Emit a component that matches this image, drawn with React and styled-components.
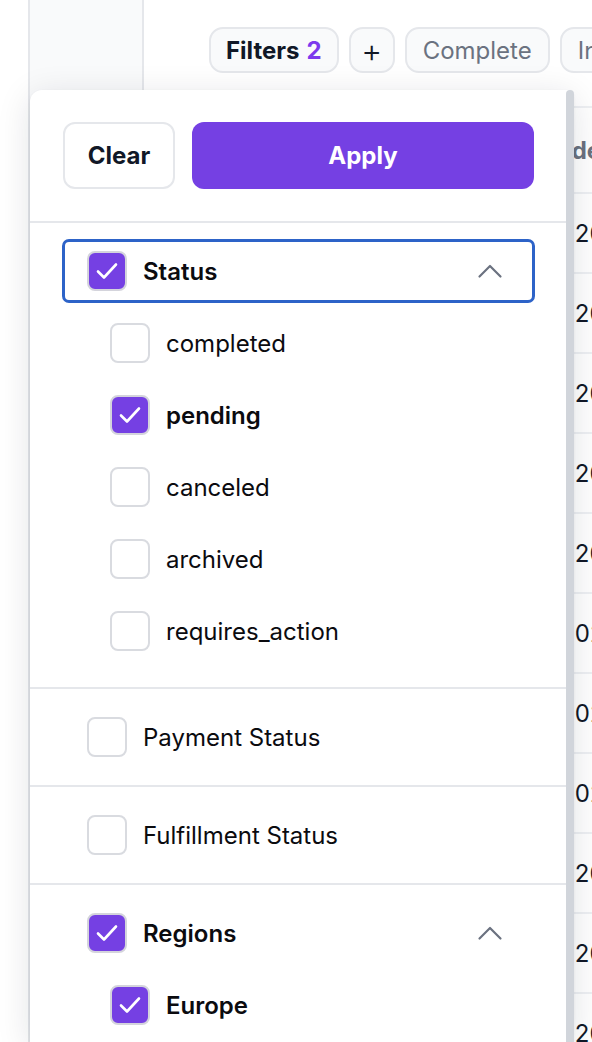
import React from "react";
import styled, { createGlobalStyle } from "styled-components";

const GlobalStyle = createGlobalStyle`
  * { box-sizing: border-box; }
  html, body { margin: 0; padding: 0; background: #ffffff; }
  body {
    font-family: Inter, "Noto Sans", "Liberation Sans", sans-serif;
    color: #111827;
    -webkit-font-smoothing: antialiased;
  }
`;

const statusOptions = [
  { label: "completed", checked: false },
  { label: "pending", checked: true },
  { label: "canceled", checked: false },
  { label: "archived", checked: false },
  { label: "requires_action", checked: false },
];

const orders = [
  ["#1048", "Ana Ruiz", "€120.40"],
  ["#1047", "Tom Berg", "€120.00"],
  ["#1046", "Lea Moor", "€120.90"],
  ["#1045", "Ivo Janke", "€120.10"],
  ["#1044", "Mia Holt", "€120.75"],
  ["#1043", "Sam Lind", "€102.30"],
  ["#1042", "Eva Kohl", "€102.00"],
  ["#1041", "Nils Faber", "€102.55"],
  ["#1040", "Jon Weiss", "€120.80"],
  ["#1039", "Ida Brand", "€120.15"],
  ["#1038", "Ole Sand", "€120.60"],
];

const CheckIcon = () => (
  <svg width="28" height="28" viewBox="0 0 28 28" fill="none">
    <polyline
      points="5,14.5 11,20.5 23,7.5"
      stroke="#ffffff"
      strokeWidth="2.6"
      strokeLinecap="round"
      strokeLinejoin="round"
    />
  </svg>
);

const ChevronUp = () => (
  <svg width="26" height="16" viewBox="0 0 26 16" fill="none">
    <polyline
      points="2.5,13.5 13,3 23.5,13.5"
      stroke="#6b7280"
      strokeWidth="2.2"
      strokeLinecap="round"
      strokeLinejoin="round"
    />
  </svg>
);

const Checkbox = ({ checked }) => (
  <Box checked={checked}>{checked && <CheckIcon />}</Box>
);

const App = () => {
  return (
    <>
      <GlobalStyle />
      <Page>
        <Gutter />
        <Sidebar />
        <Main>
          <ChipRow>
            <Chip>
              Filters <Count>2</Count>
            </Chip>
            <Chip square>+</Chip>
            <Chip muted>Complete</Chip>
            <Chip muted>Incomplete</Chip>
          </ChipRow>

          <Table>
            <HeadCell>Order</HeadCell>
            <HeadCell>Customer</HeadCell>
            <HeadCell>Order date</HeadCell>
            {orders.map((row) =>
              row.map((cell, i) => <Cell key={row[0] + i}>{cell}</Cell>)
            )}
          </Table>
        </Main>

        <Panel>
          <PanelBody>
            <Actions>
              <ClearButton>Clear</ClearButton>
              <ApplyButton>Apply</ApplyButton>
            </Actions>

            <Section expanded>
              <GroupRow focused>
                <Checkbox checked />
                <Label bold>Status</Label>
                <Chevron>
                  <ChevronUp />
                </Chevron>
              </GroupRow>
              <SubList>
                {statusOptions.map((opt) => (
                  <SubRow key={opt.label}>
                    <Checkbox checked={opt.checked} />
                    <Label bold={opt.checked}>{opt.label}</Label>
                  </SubRow>
                ))}
              </SubList>
            </Section>

            <Section>
              <GroupRow>
                <Checkbox />
                <Label>Payment Status</Label>
              </GroupRow>
            </Section>

            <Section>
              <GroupRow>
                <Checkbox />
                <Label>Fulfillment Status</Label>
              </GroupRow>
            </Section>

            <Section expanded>
              <GroupRow>
                <Checkbox checked />
                <Label bold>Regions</Label>
                <Chevron>
                  <ChevronUp />
                </Chevron>
              </GroupRow>
              <SubList>
                <SubRow>
                  <Checkbox checked />
                  <Label bold>Europe</Label>
                </SubRow>
                <SubRow>
                  <Checkbox />
                  <Label>North America</Label>
                </SubRow>
              </SubList>
            </Section>
          </PanelBody>
          <Scrollbar />
        </Panel>
      </Page>
    </>
  );
};

const Page = styled.div`
  position: relative;
  width: 592px;
  height: 1042px;
  overflow: hidden;
  display: flex;
  background: #ffffff;
`;

const Gutter = styled.div`
  width: 28px;
  flex-shrink: 0;
`;

const Sidebar = styled.div`
  width: 116px;
  flex-shrink: 0;
  background: #f9fafb;
  border-left: 2px solid #e5e7eb;
  border-right: 2px solid #e5e7eb;
`;

const Main = styled.div`
  flex: 1;
  min-width: 0;
  overflow: hidden;
  padding-top: 27px;
`;

const ChipRow = styled.div`
  display: flex;
  gap: 10px;
  padding-left: 65px;
  white-space: nowrap;
`;

const Chip = styled.div`
  flex-shrink: 0;
  height: 46px;
  display: flex;
  align-items: center;
  justify-content: center;
  padding: ${(p) => (p.square ? "0" : p.muted ? "0 16px" : "0 15px")};
  width: ${(p) => (p.square ? "46px" : "auto")};
  border: 2px solid #e5e7eb;
  border-radius: 14px;
  background: #f9fafb;
  font-size: ${(p) => (p.square ? "32px" : "24px")};
  font-weight: ${(p) => (p.muted ? 400 : p.square ? 300 : 700)};
  color: ${(p) => (p.muted ? "#6b7280" : "#111827")};
  gap: 7px;
`;

const Count = styled.span`
  color: #7c3aed;
`;

const Table = styled.div`
  margin-top: 33px;
  display: grid;
  grid-template-columns: 190px 210px 230px;
  border-top: 2px solid #eef0f3;
`;

const HeadCell = styled.div`
  height: 86px;
  display: flex;
  align-items: center;
  font-size: 24px;
  font-weight: 700;
  color: #6b7280;
  border-bottom: 2px solid #eef0f3;
  white-space: nowrap;
`;

const Cell = styled.div`
  height: 80px;
  display: flex;
  align-items: center;
  padding-left: 5px;
  font-size: 24px;
  color: #111827;
  border-bottom: 2px solid #eef0f3;
  white-space: nowrap;
`;

const Panel = styled.div`
  position: absolute;
  left: 30px;
  top: 90px;
  bottom: 0;
  width: 544px;
  display: flex;
  background: #ffffff;
  border-radius: 12px 6px 0 0;
  box-shadow: 0 6px 34px rgba(17, 24, 39, 0.12), 0 1px 3px rgba(17, 24, 39, 0.06);
`;

const PanelBody = styled.div`
  flex: 1;
  min-width: 0;
  overflow: hidden;
`;

const Scrollbar = styled.div`
  width: 8px;
  flex-shrink: 0;
  background: #d1d5db;
  border-radius: 4px 4px 0 0;
`;

const Actions = styled.div`
  display: flex;
  gap: 17px;
  padding: 32px 32px 32px 33px;
  border-bottom: 2px solid #e5e7eb;
`;

const ButtonBase = styled.button`
  height: 67px;
  border-radius: 12px;
  font-family: inherit;
  font-size: 24px;
  font-weight: 700;
  cursor: pointer;
`;

const ClearButton = styled(ButtonBase)`
  width: 112px;
  background: #ffffff;
  border: 2px solid #e5e7eb;
  color: #111827;
`;

const ApplyButton = styled(ButtonBase)`
  flex: 1;
  background: #7540e3;
  border: none;
  color: #ffffff;
`;

const Section = styled.div`
  padding: 12px 31px ${(p) => (p.expanded ? "20px" : "12px")} 32px;
  border-bottom: 2px solid #e5e7eb;
`;

const GroupRow = styled.div`
  height: 72px;
  display: flex;
  align-items: center;
  gap: 16px;
  padding: 0 32px 0 25px;
  position: relative;

  &::after {
    content: "";
    display: ${(p) => (p.focused ? "block" : "none")};
    position: absolute;
    inset: 4px 0;
    border: 3px solid #2d63c8;
    border-radius: 7px;
  }
`;

const SubList = styled.div`
  display: flex;
  flex-direction: column;
`;

const SubRow = styled.div`
  height: 72px;
  display: flex;
  align-items: center;
  gap: 16px;
  padding-left: 48px;
`;

const Box = styled.div`
  width: 40px;
  height: 40px;
  flex-shrink: 0;
  border-radius: 8px;
  border: 2px solid ${(p) => (p.checked ? "#d4d4dc" : "#d9dbe0")};
  background: ${(p) => (p.checked ? "#7540e3" : "#ffffff")};
  display: flex;
  align-items: center;
  justify-content: center;
`;

const Label = styled.span`
  font-size: 24px;
  font-weight: ${(p) => (p.bold ? 600 : 400)};
  color: #0b0b0f;
  white-space: nowrap;
`;

const Chevron = styled.span`
  margin-left: auto;
  display: flex;
  align-items: center;
`;

export default App;
